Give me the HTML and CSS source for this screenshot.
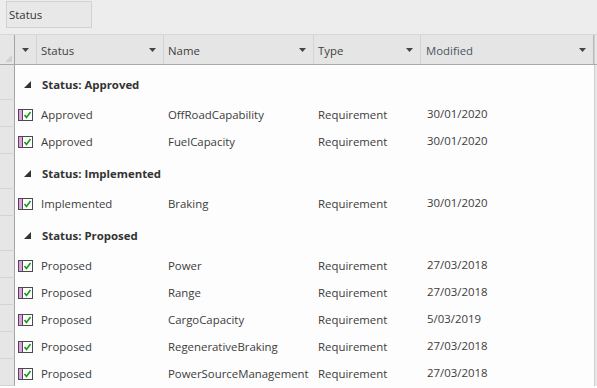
FILE: index.html
```html
<!DOCTYPE html>
<html lang="en">
<head>
  <meta charset="UTF-8">
  <title>Status list</title>
  <link rel="stylesheet" href="styles.css">
</head>
<body>
  <div class="toolbar">
    <div class="group-box">Status</div>
  </div>

  <div class="grid">
    <div class="row head">
      <div class="gutter"><svg class="corner" width="7" height="7"><polygon points="7,0 7,7 0,7" fill="#cfcfcf"/></svg></div>
      <div class="hcell arrow-only"><svg width="7" height="4"><polygon points="0,0 7,0 3.5,4" fill="#444"/></svg></div>
      <div class="hcell">Status<svg width="7" height="4"><polygon points="0,0 7,0 3.5,4" fill="#444"/></svg></div>
      <div class="hcell">Name<svg width="7" height="4"><polygon points="0,0 7,0 3.5,4" fill="#444"/></svg></div>
      <div class="hcell">Type<svg width="7" height="4"><polygon points="0,0 7,0 3.5,4" fill="#444"/></svg></div>
      <div class="hcell last">Modified<svg width="7" height="4"><polygon points="0,0 7,0 3.5,4" fill="#444"/></svg></div>
      <div class="strip"></div>
    </div>

    <div class="row group first">
      <div class="gutter"></div>
      <div class="group-title"><svg width="7" height="7"><polygon points="7,0 7,7 0,7" fill="#333"/></svg><b>Status: Approved</b></div>
      <div class="strip"></div>
    </div>
    <div class="row item">
      <div class="gutter"></div>
      <div class="cell icon"><svg width="15" height="12"><rect x="0.5" y="0.5" width="14" height="11" fill="#fff" stroke="#4a4a4a"/><rect x="1" y="1" width="3" height="10" fill="#e59ae5"/><line x1="4.5" y1="1" x2="4.5" y2="11" stroke="#4a4a4a"/><path d="M6.5 6 L8.5 8.5 L12.5 3" stroke="#1a961a" stroke-width="1.6" fill="none"/></svg></div>
      <div class="cell">Approved</div>
      <div class="cell">OffRoadCapability</div>
      <div class="cell">Requirement</div>
      <div class="cell date">30/01/2020</div>
      <div class="strip"></div>
    </div>
    <div class="row item">
      <div class="gutter"></div>
      <div class="cell icon"><svg width="15" height="12"><rect x="0.5" y="0.5" width="14" height="11" fill="#fff" stroke="#4a4a4a"/><rect x="1" y="1" width="3" height="10" fill="#e59ae5"/><line x1="4.5" y1="1" x2="4.5" y2="11" stroke="#4a4a4a"/><path d="M6.5 6 L8.5 8.5 L12.5 3" stroke="#1a961a" stroke-width="1.6" fill="none"/></svg></div>
      <div class="cell">Approved</div>
      <div class="cell">FuelCapacity</div>
      <div class="cell">Requirement</div>
      <div class="cell date">30/01/2020</div>
      <div class="strip"></div>
    </div>

    <div class="row group">
      <div class="gutter"></div>
      <div class="group-title"><svg width="7" height="7"><polygon points="7,0 7,7 0,7" fill="#333"/></svg><b>Status: Implemented</b></div>
      <div class="strip"></div>
    </div>
    <div class="row item">
      <div class="gutter"></div>
      <div class="cell icon"><svg width="15" height="12"><rect x="0.5" y="0.5" width="14" height="11" fill="#fff" stroke="#4a4a4a"/><rect x="1" y="1" width="3" height="10" fill="#e59ae5"/><line x1="4.5" y1="1" x2="4.5" y2="11" stroke="#4a4a4a"/><path d="M6.5 6 L8.5 8.5 L12.5 3" stroke="#1a961a" stroke-width="1.6" fill="none"/></svg></div>
      <div class="cell">Implemented</div>
      <div class="cell">Braking</div>
      <div class="cell">Requirement</div>
      <div class="cell date">30/01/2020</div>
      <div class="strip"></div>
    </div>

    <div class="row group">
      <div class="gutter"></div>
      <div class="group-title"><svg width="7" height="7"><polygon points="7,0 7,7 0,7" fill="#333"/></svg><b>Status: Proposed</b></div>
      <div class="strip"></div>
    </div>
    <div class="row item">
      <div class="gutter"></div>
      <div class="cell icon"><svg width="15" height="12"><rect x="0.5" y="0.5" width="14" height="11" fill="#fff" stroke="#4a4a4a"/><rect x="1" y="1" width="3" height="10" fill="#e59ae5"/><line x1="4.5" y1="1" x2="4.5" y2="11" stroke="#4a4a4a"/><path d="M6.5 6 L8.5 8.5 L12.5 3" stroke="#1a961a" stroke-width="1.6" fill="none"/></svg></div>
      <div class="cell">Proposed</div>
      <div class="cell">Power</div>
      <div class="cell">Requirement</div>
      <div class="cell date">27/03/2018</div>
      <div class="strip"></div>
    </div>
    <div class="row item">
      <div class="gutter"></div>
      <div class="cell icon"><svg width="15" height="12"><rect x="0.5" y="0.5" width="14" height="11" fill="#fff" stroke="#4a4a4a"/><rect x="1" y="1" width="3" height="10" fill="#e59ae5"/><line x1="4.5" y1="1" x2="4.5" y2="11" stroke="#4a4a4a"/><path d="M6.5 6 L8.5 8.5 L12.5 3" stroke="#1a961a" stroke-width="1.6" fill="none"/></svg></div>
      <div class="cell">Proposed</div>
      <div class="cell">Range</div>
      <div class="cell">Requirement</div>
      <div class="cell date">27/03/2018</div>
      <div class="strip"></div>
    </div>
    <div class="row item">
      <div class="gutter"></div>
      <div class="cell icon"><svg width="15" height="12"><rect x="0.5" y="0.5" width="14" height="11" fill="#fff" stroke="#4a4a4a"/><rect x="1" y="1" width="3" height="10" fill="#e59ae5"/><line x1="4.5" y1="1" x2="4.5" y2="11" stroke="#4a4a4a"/><path d="M6.5 6 L8.5 8.5 L12.5 3" stroke="#1a961a" stroke-width="1.6" fill="none"/></svg></div>
      <div class="cell">Proposed</div>
      <div class="cell">CargoCapacity</div>
      <div class="cell">Requirement</div>
      <div class="cell date">5/03/2019</div>
      <div class="strip"></div>
    </div>
    <div class="row item">
      <div class="gutter"></div>
      <div class="cell icon"><svg width="15" height="12"><rect x="0.5" y="0.5" width="14" height="11" fill="#fff" stroke="#4a4a4a"/><rect x="1" y="1" width="3" height="10" fill="#e59ae5"/><line x1="4.5" y1="1" x2="4.5" y2="11" stroke="#4a4a4a"/><path d="M6.5 6 L8.5 8.5 L12.5 3" stroke="#1a961a" stroke-width="1.6" fill="none"/></svg></div>
      <div class="cell">Proposed</div>
      <div class="cell">RegenerativeBraking</div>
      <div class="cell">Requirement</div>
      <div class="cell date">27/03/2018</div>
      <div class="strip"></div>
    </div>
    <div class="row item">
      <div class="gutter"></div>
      <div class="cell icon"><svg width="15" height="12"><rect x="0.5" y="0.5" width="14" height="11" fill="#fff" stroke="#4a4a4a"/><rect x="1" y="1" width="3" height="10" fill="#e59ae5"/><line x1="4.5" y1="1" x2="4.5" y2="11" stroke="#4a4a4a"/><path d="M6.5 6 L8.5 8.5 L12.5 3" stroke="#1a961a" stroke-width="1.6" fill="none"/></svg></div>
      <div class="cell">Proposed</div>
      <div class="cell">PowerSourceManagement</div>
      <div class="cell">Requirement</div>
      <div class="cell date">27/03/2018</div>
      <div class="strip"></div>
    </div>
  </div>
</body>
</html>
```

FILE: styles.css
```css
body {
  margin: 0;
  width: 597px;
  height: 388px;
  overflow: hidden;
  font-family: "Open Sans", "Noto Sans", sans-serif;
  font-size: 11.4px;
  color: #3c3c3c;
  background-color: #fdfdfd;
}

.toolbar {
  height: 34px;
  background-color: #ededed;
  padding: 1px 0 0 6px;
  box-sizing: border-box;
}

.group-box {
  width: 82px;
  height: 25px;
  border: 1px solid #d2d2d2;
  background-color: #e8e8e8;
  padding-left: 2px;
  line-height: 26px;
  color: #333;
}

.row {
  display: grid;
  grid-template-columns: 15px 22px 127px 150px 107px 173px 3px;
}

.head {
  height: 29px;
  border-top: 1px solid #d8d8d8;
  border-bottom: 1px solid #a9a9a9;
  background-color: #e5e5e5;
}

.gutter {
  background-color: #e6e6e6;
  border-right: 1px solid #a3a3a3;
  border-bottom: 1px solid #d3d3d3;
}

.head .gutter {
  border-bottom: none;
  display: flex;
  align-items: flex-end;
  justify-content: flex-end;
  padding: 0 2px 2px 0;
}

.hcell {
  display: flex;
  align-items: center;
  justify-content: space-between;
  padding: 1px 7px 0 4px;
  border-right: 1px solid #d4d4d4;
  color: #404040;
}

.hcell.arrow-only {
  justify-content: center;
  padding: 0;
}

.hcell.last {
  border-right: 1px solid #b8b8b8;
  padding-left: 5px;
  color: #4a5563;
}

.strip {
  background-color: #e8e8e8;
  border-left: 1px solid #cfcfcf;
}

.group {
  height: 35px;
}

.group-title {
  grid-column: 2 / 7;
  display: flex;
  align-items: center;
  gap: 11px;
  padding: 3px 0 0 9px;
  color: #333;
}

.item {
  height: 27px;
}

.cell {
  display: flex;
  align-items: center;
  padding: 1px 0 0 4px;
  white-space: nowrap;
}

.cell.icon {
  padding: 2px 0 0 3px;
}

.cell.date {
  padding: 0 0 1px 6px;
}
```
